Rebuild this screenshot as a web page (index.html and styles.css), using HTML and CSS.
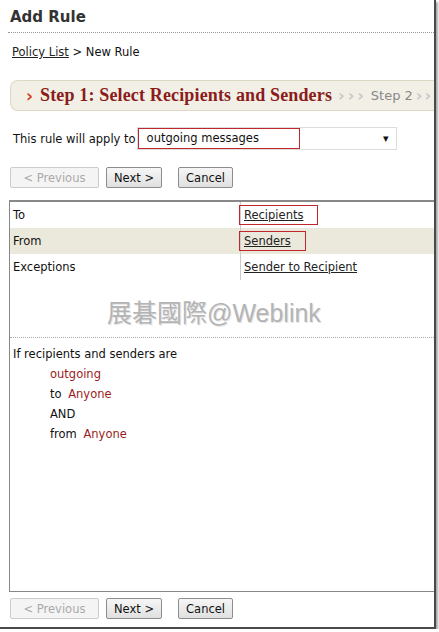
FILE: index.html
```html
<!DOCTYPE html>
<html lang="en">
<head>
    <meta charset="UTF-8">
    <title>Add Rule</title>
    <link rel="stylesheet" href="styles.css">
</head>
<body>
    <div class="frame">
        <h1>Add Rule</h1>

        <div class="crumbs"><a href="#">Policy List</a> &gt; New Rule</div>

        <div class="steps">
            <span class="chev">&#8250;</span>
            <span class="current">Step 1: Select Recipients and Senders</span>
            <span class="arrows">&#8250;&#8250;&#8250;</span>
            <span class="next-step">Step 2</span>
            <span class="arrows last">&#8250;&#8250;</span>
        </div>

        <div class="apply-row">
            <span>This rule will apply to</span>
            <div class="select">
                <span class="mark">outgoing messages</span>
                <span class="caret">&#9662;</span>
            </div>
        </div>

        <div class="buttons">
            <button disabled>&lt; Previous</button>
            <button>Next &gt;</button>
            <button class="cancel">Cancel</button>
        </div>

        <div class="rule-box">
            <div class="row">
                <div class="label">To</div>
                <div class="value"><a href="#" class="mark">Recipients</a></div>
            </div>
            <div class="row alt">
                <div class="label">From</div>
                <div class="value"><a href="#" class="mark">Senders</a></div>
            </div>
            <div class="row">
                <div class="label">Exceptions</div>
                <div class="value"><a href="#">Sender to Recipient</a></div>
            </div>

            <div class="watermark">展碁國際@Weblink</div>

            <div class="summary">
                <p>If recipients and senders are</p>
                <p class="indent"><span class="hl first">outgoing</span></p>
                <p class="indent">to <span class="hl">Anyone</span></p>
                <p class="indent">AND</p>
                <p class="indent">from <span class="hl">Anyone</span></p>
            </div>
        </div>

        <div class="buttons bottom">
            <button disabled>&lt; Previous</button>
            <button>Next &gt;</button>
            <button class="cancel">Cancel</button>
        </div>
    </div>
</body>
</html>
```

FILE: styles.css
```css
body {
    margin: 0;
    background-color: #fff;
    font-family: "DejaVu Sans", Verdana, sans-serif;
    font-size: 11px;
    color: #111;
}
.frame {
    width: 434px;
    height: 627px;
    border-right: 2px solid #4a4a4a;
    border-bottom: 2px solid #4a4a4a;
    box-shadow: 2px 2px 2px rgba(0, 0, 0, 0.35);
    overflow: hidden;
}
h1 {
    margin: 0 0 0 8px;
    padding: 8px 0 6px 2px;
    font-size: 15px;
    font-weight: bold;
    color: #333;
    border-bottom: 1px dotted #999;
    width: 424px;
}
.crumbs {
    margin: 12px 0 0 12px;
    font-size: 11.5px;
}
a {
    color: #222;
}
.steps {
    margin: 21px 0 0 10px;
    height: 29px;
    display: flex;
    align-items: center;
    white-space: nowrap;
    background-color: #f2f0e6;
    border: 1px solid #dcd8c4;
    border-right: none;
    border-radius: 8px 0 0 8px;
    padding-left: 15px;
}
.steps span {
    flex-shrink: 0;
}
.chev {
    color: #d23a1a;
    font-weight: bold;
    font-size: 17px;
    margin-right: 7px;
}
.current {
    font-family: "Liberation Serif", Georgia, serif;
    font-weight: bold;
    font-size: 18px;
    letter-spacing: 0.15px;
    color: #8a1c1c;
}
.arrows {
    color: #c8c8c8;
    font-size: 16px;
    font-weight: bold;
    letter-spacing: 3px;
    margin: 0 4px 0 6px;
}
.arrows.last {
    margin: 0 0 0 3px;
    letter-spacing: 2px;
}
.next-step {
    color: #888;
    font-size: 13px;
}
.apply-row {
    margin: 16px 0 0 13px;
    display: flex;
    align-items: center;
    font-size: 11.5px;
}
.select {
    width: 258px;
    height: 21px;
    margin-left: 1px;
    border: 1px solid #ddd;
    display: flex;
    align-items: center;
    justify-content: space-between;
}
.select .mark {
    display: inline-block;
    width: 152px;
    height: 19px;
    line-height: 19px;
    padding-left: 8px;
    border: 1px solid #c0272d;
}
.caret {
    margin-right: 7px;
    font-size: 11px;
}
.buttons {
    margin: 17px 0 0 10px;
    display: flex;
    gap: 7px;
}
.buttons button {
    font-family: inherit;
    font-size: 11.5px;
    height: 21px;
    padding: 0 7px;
    background: linear-gradient(#f6f6f6, #e0e0e0);
    border: 1px solid #8c8c8c;
    border-radius: 2px;
    color: #111;
}
.buttons button[disabled] {
    width: 89px;
    color: #aaa;
    border-color: #ccc;
    background: #f4f4f4;
}
.buttons .cancel {
    margin-left: 9px;
}
.rule-box {
    margin: 12px 0 0 9px;
    height: 389px;
    border: 1px solid #888;
    border-right: none;
    border-top: 2px solid #888;
}
.row {
    display: flex;
    height: 26px;
    align-items: center;
    font-size: 11.5px;
}
.row.alt {
    background-color: #ebe9dc;
}
.label {
    width: 227px;
    padding-left: 3px;
}
.value {
    align-self: stretch;
    display: flex;
    align-items: center;
    border-left: 1px solid #ccc;
    padding-left: 3px;
}
.value .mark {
    display: inline-block;
    margin-left: -5px;
    padding: 2px 14px 2px 4px;
    border: 1px solid #c0272d;
}
.watermark {
    margin-top: 13px;
    padding-left: 97px;
    height: 44px;
    font-family: "Liberation Sans", "Noto Sans CJK TC", sans-serif;
    font-size: 25px;
    color: #b4b4b4;
    text-shadow: 1px 1px 0 #e4e4e4;
    border-bottom: 1px dotted #aaa;
}
.summary {
    padding: 8px 0 0 3px;
    font-size: 11.5px;
}
.summary p {
    margin: 0;
    height: 20px;
    line-height: 16px;
}
.summary .indent {
    padding-left: 37px;
}
.hl {
    color: #9b1b1b;
    margin-left: 3px;
}
.hl.first {
    margin-left: 0;
}
.buttons.bottom {
    margin-top: 6px;
}
```
